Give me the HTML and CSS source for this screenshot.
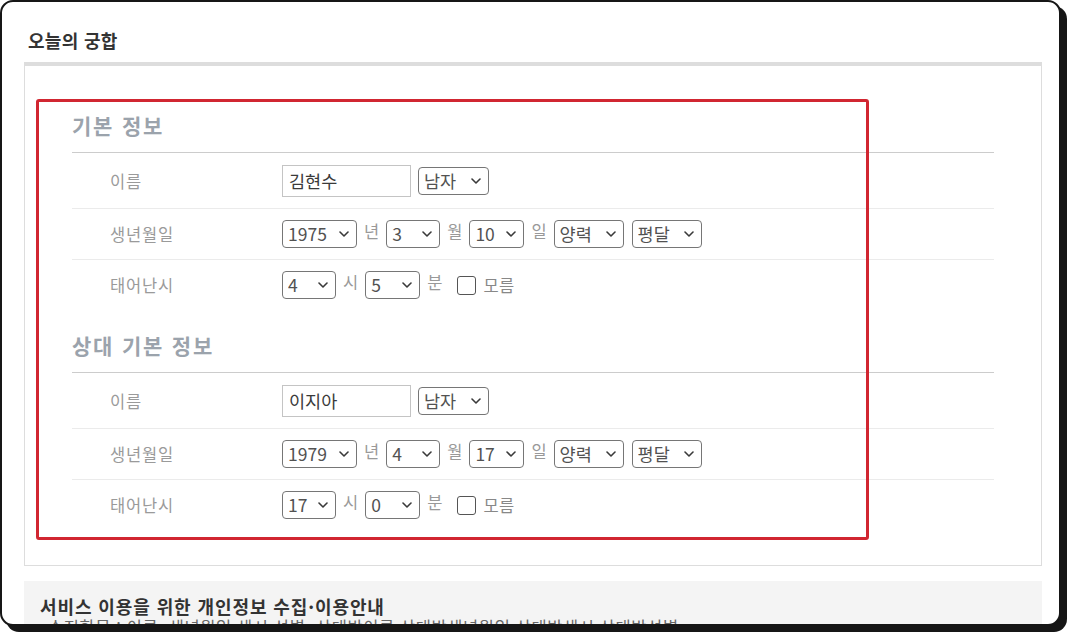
FILE: index.html
```html
<!DOCTYPE html>
<html lang="ko">
<head>
<meta charset="utf-8">
<title>오늘의 궁합</title>
<link rel="stylesheet" href="styles.css">
</head>
<body>
<div class="frame">
  <h2 class="page-title">오늘의 궁합</h2>
  <div class="panel">
    <section class="group">
      <h3 class="group-title">기본 정보</h3>
      <div class="row row-name">
        <div class="label">이름</div>
        <div class="controls">
          <input class="text-input" type="text" value="김현수">
          <span class="sel-wrap"><select class="sel w71"><option>남자</option><option>여자</option></select><svg class="chev" width="10" height="6" viewBox="0 0 10 6"><path d="M1 1 L5 5 L9 1" /></svg></span>
        </div>
      </div>
      <div class="row">
        <div class="label">생년월일</div>
        <div class="controls">
          <span class="sel-wrap"><select class="sel w75"><option>1975</option></select><svg class="chev" width="10" height="6" viewBox="0 0 10 6"><path d="M1 1 L5 5 L9 1" /></svg></span><span class="unit">년</span>
          <span class="sel-wrap"><select class="sel w54"><option>3</option></select><svg class="chev" width="10" height="6" viewBox="0 0 10 6"><path d="M1 1 L5 5 L9 1" /></svg></span><span class="unit">월</span>
          <span class="sel-wrap"><select class="sel w55"><option>10</option></select><svg class="chev" width="10" height="6" viewBox="0 0 10 6"><path d="M1 1 L5 5 L9 1" /></svg></span><span class="unit">일</span>
          <span class="sel-wrap"><select class="sel w70"><option>양력</option><option>음력</option></select><svg class="chev" width="10" height="6" viewBox="0 0 10 6"><path d="M1 1 L5 5 L9 1" /></svg></span>
          <span class="sel-wrap sel-gap"><select class="sel w70"><option>평달</option><option>윤달</option></select><svg class="chev" width="10" height="6" viewBox="0 0 10 6"><path d="M1 1 L5 5 L9 1" /></svg></span>
        </div>
      </div>
      <div class="row">
        <div class="label">태어난시</div>
        <div class="controls">
          <span class="sel-wrap"><select class="sel w54"><option>4</option></select><svg class="chev" width="10" height="6" viewBox="0 0 10 6"><path d="M1 1 L5 5 L9 1" /></svg></span><span class="unit">시</span>
          <span class="sel-wrap"><select class="sel w55"><option>5</option></select><svg class="chev" width="10" height="6" viewBox="0 0 10 6"><path d="M1 1 L5 5 L9 1" /></svg></span><span class="unit">분</span>
          <input class="check" type="checkbox"><span class="check-label">모름</span>
        </div>
      </div>
    </section>
    <section class="group group-second">
      <h3 class="group-title">상대 기본 정보</h3>
      <div class="row row-name">
        <div class="label">이름</div>
        <div class="controls">
          <input class="text-input" type="text" value="이지아">
          <span class="sel-wrap"><select class="sel w71"><option>남자</option><option>여자</option></select><svg class="chev" width="10" height="6" viewBox="0 0 10 6"><path d="M1 1 L5 5 L9 1" /></svg></span>
        </div>
      </div>
      <div class="row">
        <div class="label">생년월일</div>
        <div class="controls">
          <span class="sel-wrap"><select class="sel w75"><option>1979</option></select><svg class="chev" width="10" height="6" viewBox="0 0 10 6"><path d="M1 1 L5 5 L9 1" /></svg></span><span class="unit">년</span>
          <span class="sel-wrap"><select class="sel w54"><option>4</option></select><svg class="chev" width="10" height="6" viewBox="0 0 10 6"><path d="M1 1 L5 5 L9 1" /></svg></span><span class="unit">월</span>
          <span class="sel-wrap"><select class="sel w55"><option>17</option></select><svg class="chev" width="10" height="6" viewBox="0 0 10 6"><path d="M1 1 L5 5 L9 1" /></svg></span><span class="unit">일</span>
          <span class="sel-wrap"><select class="sel w70"><option>양력</option><option>음력</option></select><svg class="chev" width="10" height="6" viewBox="0 0 10 6"><path d="M1 1 L5 5 L9 1" /></svg></span>
          <span class="sel-wrap sel-gap"><select class="sel w70"><option>평달</option><option>윤달</option></select><svg class="chev" width="10" height="6" viewBox="0 0 10 6"><path d="M1 1 L5 5 L9 1" /></svg></span>
        </div>
      </div>
      <div class="row">
        <div class="label">태어난시</div>
        <div class="controls">
          <span class="sel-wrap"><select class="sel w54"><option>17</option></select><svg class="chev" width="10" height="6" viewBox="0 0 10 6"><path d="M1 1 L5 5 L9 1" /></svg></span><span class="unit">시</span>
          <span class="sel-wrap"><select class="sel w55"><option>0</option></select><svg class="chev" width="10" height="6" viewBox="0 0 10 6"><path d="M1 1 L5 5 L9 1" /></svg></span><span class="unit">분</span>
          <input class="check" type="checkbox"><span class="check-label">모름</span>
        </div>
      </div>
    </section>
  </div>
  <div class="notice">
    <h4 class="notice-title">서비스 이용을 위한 개인정보 수집·이용안내</h4>
    <p class="notice-text">수집항목 : 이름, 생년월일 생시 성별, 상대방이름 상대방생년월일 상대방생시 상대방성별</p>
  </div>
  <div class="highlight"></div>
</div>
</body>
</html>
```

FILE: styles.css
```css
* { box-sizing: border-box; }

html, body {
  margin: 0;
  background: #ffffff;
}

body {
  width: 1067px;
  height: 632px;
  overflow: hidden;
  font-family: "Noto Sans CJK KR", "Noto Sans", sans-serif;
}

.frame {
  position: relative;
  width: 1061px;
  height: 626px;
  border: 2px solid #161616;
  border-radius: 13px;
  box-shadow: 6px 6px 0 #161616;
  overflow: hidden;
  background: #ffffff;
  padding: 25px 17px 0 22px;
}

.page-title {
  margin: 0 0 9px 4px;
  font-size: 18px;
  line-height: 26px;
  font-weight: 700;
  letter-spacing: 0.3px;
  color: #333333;
}

.panel {
  border: 1px solid #dddddd;
  border-top: 4px solid #dddddd;
  padding: 45px 47px 35px;
}

.group-title {
  margin: 0;
  padding-bottom: 13px;
  border-bottom: 1px solid #cccccc;
  font-size: 21px;
  line-height: 28px;
  font-weight: 700;
  letter-spacing: 1.8px;
  color: #9ba3ac;
}

.group-second {
  margin-top: 21px;
}

.row {
  display: flex;
  align-items: center;
  height: 51px;
  border-bottom: 1px solid #ebebeb;
}

.row-name {
  height: 56px;
}

.row:last-child {
  border-bottom: none;
  height: 50px;
}

.label {
  width: 210px;
  flex: none;
  padding-left: 38px;
  font-size: 16.5px;
  letter-spacing: 0.8px;
  color: #9a9a9a;
}

.controls {
  display: flex;
  align-items: center;
  gap: 7px;
}

.text-input {
  width: 129px;
  height: 32px;
  margin: 0;
  padding: 0 6px;
  border: 1px solid #c4c4c4;
  border-radius: 0;
  font-family: "Noto Sans CJK KR", "Noto Sans", sans-serif;
  font-size: 17.5px;
  color: #3a3a3a;
  outline: none;
}

.sel-wrap {
  position: relative;
  display: flex;
}

.sel-gap {
  margin-left: 1px;
}

.sel {
  appearance: none;
  -webkit-appearance: none;
  height: 28px;
  margin: 0;
  padding: 0 0 0 5px;
  border: 1px solid #767676;
  border-radius: 4px;
  font-family: "Noto Sans CJK KR", "Noto Sans", sans-serif;
  font-size: 17.5px;
  line-height: 26px;
  color: #525252;
  background: #ffffff;
}

.chev {
  position: absolute;
  right: 8px;
  top: 50%;
  margin-top: -3px;
  pointer-events: none;
}

.chev path {
  fill: none;
  stroke: #3a3a3a;
  stroke-width: 1.6;
  stroke-linecap: round;
  stroke-linejoin: round;
}

.w54 { width: 54px; }
.w55 { width: 55px; }
.w70 { width: 70px; }
.w71 { width: 71px; }
.w75 { width: 75px; }

.unit {
  margin-top: -7px;
  font-size: 16.5px;
  color: #999999;
}

.check {
  appearance: none;
  -webkit-appearance: none;
  width: 19px;
  height: 19px;
  margin: 0 0 0 8px;
  border: 1.5px solid #555555;
  border-radius: 3px;
  background: #ffffff;
}

.check-label {
  font-size: 16.5px;
  letter-spacing: 0.5px;
  color: #888888;
}

.notice {
  margin-top: 15px;
  background: #f4f4f4;
  padding: 15px 16px 14px;
}

.notice-title {
  margin: 0;
  font-size: 18px;
  line-height: 21px;
  font-weight: 700;
  letter-spacing: 0.9px;
  color: #333333;
}

.notice-text {
  margin: 0;
  padding-left: 8px;
  font-size: 16.5px;
  line-height: 21px;
  letter-spacing: 0.6px;
  color: #666666;
}

.highlight {
  position: absolute;
  left: 34px;
  top: 97px;
  width: 833px;
  height: 441px;
  border: 3.5px solid #d12631;
  border-radius: 3px;
  pointer-events: none;
}
```
